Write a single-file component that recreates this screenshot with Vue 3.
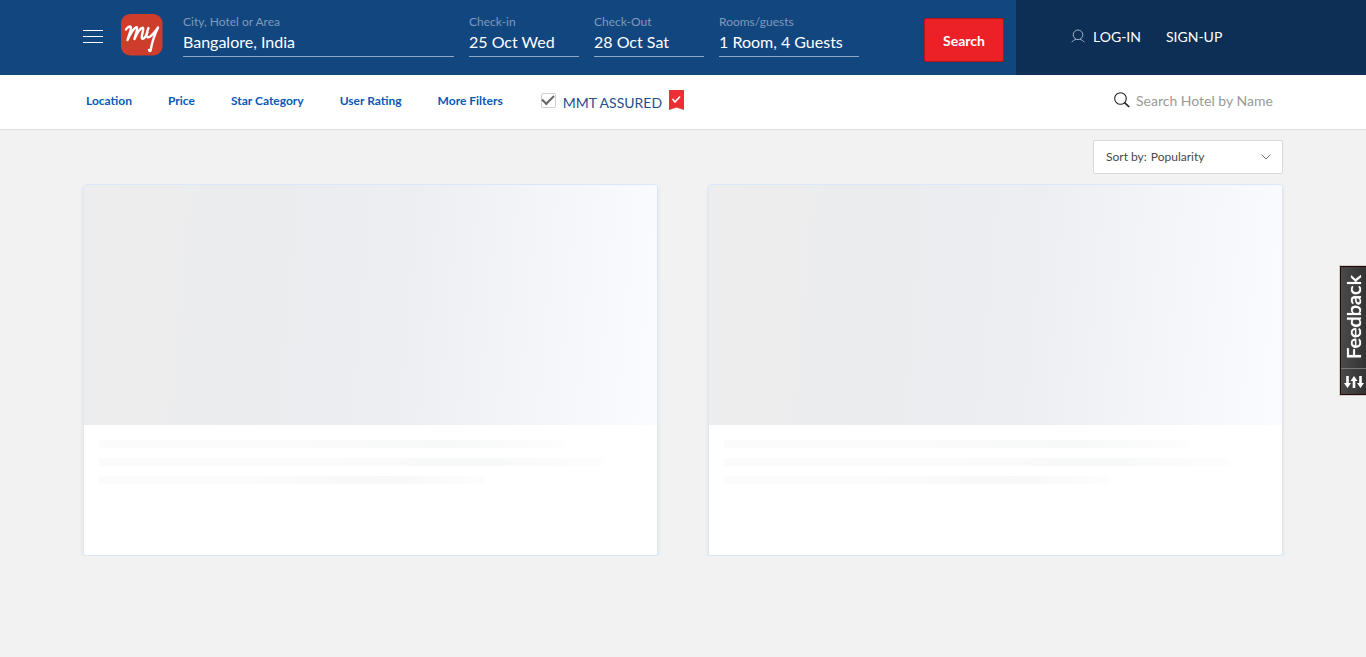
<script setup>
import { ref } from 'vue'

const fields = ref([
  { id: 'city', label: 'City, Hotel or Area', value: 'Bangalore, India' },
  { id: 'checkin', label: 'Check-in', value: '25 Oct Wed' },
  { id: 'checkout', label: 'Check-Out', value: '28 Oct Sat' },
  { id: 'rooms', label: 'Rooms/guests', value: '1 Room, 4 Guests' }
])
const filters = ['Location', 'Price', 'Star Category', 'User Rating', 'More Filters']
const assured = ref(true)
const sort = ref('Popularity')
</script>

<template>
  <div class="page">
    <header class="top">
      <div class="wrap bar">
        <button class="menu" aria-label="Menu"><span></span><span></span><span></span></button>
        <a class="logo" href="#" aria-label="Home">
          <svg viewBox="0 0 42 42" width="42" height="42">
            <rect width="41.500" height="41.500" rx="9" fill="#ce3c2b" />
            <g fill="none" stroke="#fff" stroke-width="2.400" stroke-linecap="round" stroke-linejoin="round">
              <path d="M5 15.500C6.500 13 9 12 9.800 13C10.500 15 8 21 6.500 26C9 20 13.500 13 15.800 13.200C17.300 14.500 14.500 20.500 13.500 25C16 19.500 19.800 13.200 22 13.800C23.300 15.300 19.800 22 21 24.500C22.200 25.800 24.500 23 26.500 18.500" />
              <path d="M27.500 14C26 17.500 24.500 22 26.500 23.300C29.500 24 33 19 37 13.500C34 20 31 28 29.700 36C29.500 37.500 28.300 37.300 28 36" />
            </g>
          </svg>
        </a>
        <form class="search" @submit.prevent>
          <div v-for="f in fields" :key="f.id" class="field" :class="f.id">
            <label :for="f.id">{{ f.label }}</label>
            <input :id="f.id" v-model="f.value" type="text" />
          </div>
          <button class="go" type="submit">Search</button>
        </form>
        <nav class="account">
          <a href="#">
            <svg viewBox="0 0 14 14" width="14" height="14" fill="none" stroke="#9fb0c4" stroke-width="1">
              <circle cx="7" cy="5.800" r="4.800" />
              <path d="M.8 13.200C1.800 11.400 3.400 10.900 5 10.400M13.200 13.200C12.200 11.400 10.600 10.900 9 10.400" />
            </svg>LOG-IN</a>
          <a href="#">SIGN-UP</a>
        </nav>
      </div>
    </header>

    <div class="filters">
      <div class="wrap filter-row">
        <button v-for="f in filters" :key="f" class="filter">{{ f }}</button>
        <label class="assured">
          <input v-model="assured" type="checkbox" />
          <span>MMT ASSURED</span>
          <svg viewBox="0 0 15 20" width="15" height="20">
            <path d="M0 0H15V20L7.500 17.500L0 20Z" fill="#ee2e35" />
            <path d="M3.500 9L6 12L11 6.500" fill="none" stroke="#fff" stroke-width="1.700" />
          </svg>
        </label>
        <div class="by-name">
          <svg viewBox="0 0 16 16" width="16" height="16" fill="none" stroke="#222">
            <circle cx="6.500" cy="6.500" r="5.800" stroke-width="1.100" />
            <path d="M10.600 10.600L15.200 15" stroke-width="1.700" />
          </svg>
          <input type="text" placeholder="Search Hotel by Name" aria-label="Search Hotel by Name" />
        </div>
      </div>
    </div>

    <main class="wrap">
      <div class="sort-row">
        <div class="sort">
          <label for="sort">Sort by:</label>
          <select id="sort" v-model="sort">
            <option>Popularity</option>
            <option>Price</option>
            <option>User Rating</option>
          </select>
          <svg viewBox="0 0 10 6" width="10" height="6" fill="none" stroke="#777">
            <path d="M.5 .5L5 5L9.500 .5" />
          </svg>
        </div>
      </div>
      <div class="cards">
        <article v-for="n in 2" :key="n" class="card" aria-busy="true">
          <div class="photo"></div>
          <div class="lines"><i class="a"></i><i class="b"></i><i class="c"></i></div>
        </article>
      </div>
    </main>

    <button class="feedback">
      <span>Feedback</span>
      <svg viewBox="0 0 20 14" width="20" height="14" fill="#fff">
        <path d="M2.200 1H4.800V8H7L3.500 13L0 8H2.200Z" />
        <path d="M8.700 13H11.300V6H13.500L10 1L6.500 6H8.700Z" />
        <path d="M15.200 1H17.800V8H20L16.500 13L13 8H15.200Z" />
      </svg>
    </button>
  </div>
</template>

<style>
body {
  background: #f2f2f2;
}
</style>

<style scoped>
.page {
  font-family: Lato, "Liberation Sans", sans-serif;
  color: #4a4a4a;
}
.page * {
  box-sizing: border-box;
}
button,
input,
select {
  font: inherit;
  color: inherit;
  border: 0;
  padding: 0;
  margin: 0;
  background: none;
  border-radius: 0;
}
a {
  color: inherit;
  text-decoration: none;
}
.wrap {
  max-width: 1200px;
  margin: 0 auto;
}
.top {
  background: linear-gradient(to right, #12467f calc(50% + 333px), #0d2f55 calc(50% + 333px));
  color: #fff;
}
.bar {
  display: flex;
  height: 75px;
}
.menu {
  display: flex;
  flex-direction: column;
  gap: 5px;
  width: 20px;
  margin: 30px 18px 0 0;
  align-self: flex-start;
}
.menu span {
  width: 20px;
  height: 1px;
  background: #fff;
}
.logo {
  margin: 14px 20px 0 0;
}
.logo svg {
  display: block;
}
.search {
  flex: 1;
  display: flex;
  gap: 15px;
}
.field {
  width: 110px;
  padding-top: 14px;
}
.field.city {
  width: 271px;
}
.field.rooms {
  width: 140px;
}
.field label {
  display: block;
  font-size: 12px;
  line-height: 16px;
  color: #7e9abc;
}
.field input {
  width: 100%;
  height: 27px;
  padding-bottom: 4px;
  font-size: 16px;
  border-bottom: 1px solid #8fa9c5;
}
.go {
  width: 80px;
  height: 44px;
  margin: 18px 0 0 50px;
  background: #ec2027;
  border: 1px solid #b5121a;
  border-radius: 2px;
  font-size: 14px;
  font-weight: 700;
}
.account {
  display: flex;
  align-items: center;
  gap: 25px;
  width: 212px;
  padding-bottom: 2px;
  font-size: 14px;
}
.account a {
  display: flex;
  align-items: center;
  gap: 8px;
}
.account svg {
  margin-bottom: 2px;
}
.filters {
  background: #fff;
  border-bottom: 1px solid #e0e0e0;
}
.filter-row {
  display: flex;
  align-items: center;
  height: 54px;
  padding: 0 0 4px 3px;
}
.filter {
  font-size: 12px;
  font-weight: 700;
  color: #0a58b8;
  margin-right: 36px;
}
.assured {
  display: flex;
  align-items: center;
  gap: 7px;
  color: #1d4f91;
  font-size: 14px;
  margin-left: 2px;
}
.assured input {
  appearance: none;
  width: 15px;
  height: 15px;
  border: 1px solid #d0d0d0;
  border-radius: 2px;
  display: grid;
  place-items: center;
}
.assured input:checked::before {
  content: "";
  width: 10px;
  height: 5px;
  border: solid #666;
  border-width: 0 0 2px 2px;
  transform: rotate(-45deg);
  margin-bottom: 3px;
}
.assured span {
  padding-top: 4px;
}
.by-name {
  display: flex;
  align-items: center;
  gap: 6px;
  width: 169px;
  margin-left: auto;
}
.by-name input {
  flex: 1;
  min-width: 0;
  font-size: 14px;
}
.by-name input::placeholder {
  color: #999;
  opacity: 1;
}
.sort-row {
  display: flex;
  justify-content: flex-end;
  padding: 10px 0;
}
.sort {
  display: flex;
  align-items: center;
  width: 190px;
  height: 34px;
  padding: 0 11px 2px 12px;
  background: #fff;
  border: 1px solid #d8d8d8;
  border-radius: 2px;
  font-size: 12px;
}
.sort select {
  appearance: none;
  flex: 1;
  margin-left: 4px;
}
.sort svg {
  margin-top: 2px;
}
.cards {
  display: grid;
  grid-template-columns: 1fr 1fr;
  gap: 50px;
}
.card {
  background: #fff;
  border: 1px solid #d7e8fb;
  border-radius: 3px;
  box-shadow: 0 2px 4px rgba(0, 0, 0, 0.07);
  overflow: hidden;
}
.photo {
  height: 240px;
  background: linear-gradient(95deg, #ededed 5%, #ebecee 30%, #edeef2 55%, #f9fbfe 98%);
}
.lines {
  display: flex;
  flex-direction: column;
  gap: 10px;
  height: 130px;
  padding: 15px;
}
.lines i {
  height: 8px;
  background: linear-gradient(to right, #fbfbfb, #fbfbfb 40%, #f7f8f8 75%, #fdfdfd);
}
.a {
  width: 465px;
}
.b {
  width: 505px;
}
.c {
  width: 386px;
}
.feedback {
  position: fixed;
  right: 0;
  top: 266px;
  display: flex;
  flex-direction: column;
  align-items: center;
  width: 26px;
  height: 129px;
  background: linear-gradient(to right, #4a4a4a, #333);
  border: 1px solid #2a0808;
  border-right: 0;
  box-shadow: 0 0 0 1px #d0cccc;
  color: #fff;
}
.feedback span {
  writing-mode: vertical-rl;
  transform: rotate(180deg);
  height: 102px;
  width: 25px;
  line-height: 25px;
  font-size: 20px;
  font-weight: 500;
  border-top: 1px solid #777;
  text-shadow: 0 0 1px #fff;
}
.feedback svg {
  margin-top: 6px;
}
</style>
